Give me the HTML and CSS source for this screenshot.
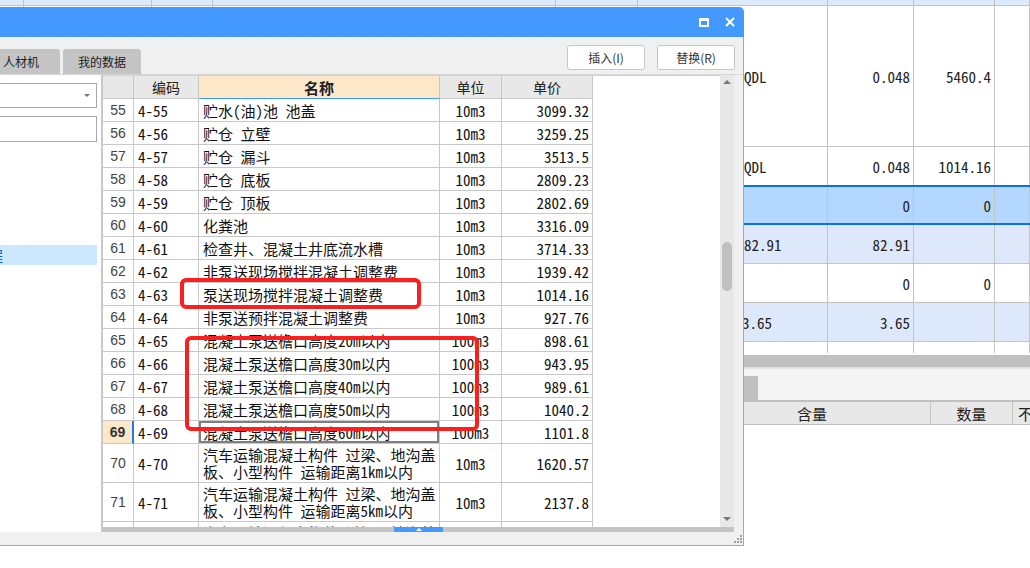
FILE: index.html
```html
<!DOCTYPE html>
<html lang="zh-CN">
<head>
<meta charset="utf-8">
<title>定额库</title>
<link rel="stylesheet" href="styles.css">
</head>
<body>
<div class="app">
  <div class="bgr bg-head"><div></div><div></div><div></div><div></div><div></div><div></div><div></div><div></div><div></div></div>
  <div class="bgr r1"><div></div><div></div><div></div><div></div><div></div><div class="l">QDL</div><div>0.048</div><div>5460.4</div><div></div></div>
  <div class="bgr r2"><div></div><div></div><div></div><div></div><div></div><div class="l">QDL</div><div>0.048</div><div>1014.16</div><div></div></div>
  <div class="bgr rsel"><div></div><div></div><div></div><div></div><div></div><div></div><div>0</div><div>0</div><div></div></div>
  <div class="bgr rn alt"><div></div><div></div><div></div><div></div><div></div><div class="l">82.91</div><div>82.91</div><div></div><div></div></div>
  <div class="bgr rn"><div></div><div></div><div></div><div></div><div></div><div></div><div>0</div><div>0</div><div></div></div>
  <div class="bgr rn alt"><div></div><div></div><div></div><div></div><div></div><div class="l l2">3.65</div><div>3.65</div><div></div><div></div></div>
  <div class="bgr r7"><div></div><div></div><div></div><div></div><div></div><div></div><div></div><div></div><div></div></div>
  <div class="bg-gap"></div>
  <div class="bg-split"></div>
  <div class="bg-tabs"><div class="bg-tab"></div></div>
  <div class="bg-head2"><div></div><div>含量</div><div>数量</div><div class="cut">不含税</div></div>
  <div class="bg-rest"></div>
</div>

<div class="dialog">
  <div class="titlebar">
    <span class="ico-max"></span>
    <svg class="ico-close" width="10" height="10" viewBox="0 0 10 10"><path d="M1 1L9 9M9 1L1 9" stroke="#fff" stroke-width="2" fill="none"/></svg>
  </div>
  <div class="dbody">
    <div class="toolbar">
      <div class="tabs"><div class="tab">人材机</div><div class="tab">我的数据</div></div>
      <div class="btns"><button class="btn">插入(I)</button><button class="btn">替换(R)</button></div>
    </div>
    <div class="main">
      <div class="left">
        <div class="combo"><span class="caret"></span></div>
        <div class="input"></div>
        <div class="sel-item"><span>工程</span></div>
      </div>
      <div class="grid">
        <div class="gtop">
          <div class="table">
            <div class="tr head"><div class="td"></div><div class="td">编码</div><div class="td hname">名称</div><div class="td">单位</div><div class="td">单价</div></div>
            <div class="tr"><div class="td n">55</div><div class="td c">4-55</div><div class="td m">贮水(油)池 池盖</div><div class="td u">10m3</div><div class="td p">3099.32</div></div>
            <div class="tr"><div class="td n">56</div><div class="td c">4-56</div><div class="td m">贮仓 立壁</div><div class="td u">10m3</div><div class="td p">3259.25</div></div>
            <div class="tr"><div class="td n">57</div><div class="td c">4-57</div><div class="td m">贮仓 漏斗</div><div class="td u">10m3</div><div class="td p">3513.5</div></div>
            <div class="tr"><div class="td n">58</div><div class="td c">4-58</div><div class="td m">贮仓 底板</div><div class="td u">10m3</div><div class="td p">2809.23</div></div>
            <div class="tr"><div class="td n">59</div><div class="td c">4-59</div><div class="td m">贮仓 顶板</div><div class="td u">10m3</div><div class="td p">2802.69</div></div>
            <div class="tr"><div class="td n">60</div><div class="td c">4-60</div><div class="td m">化粪池</div><div class="td u">10m3</div><div class="td p">3316.09</div></div>
            <div class="tr"><div class="td n">61</div><div class="td c">4-61</div><div class="td m">检查井、混凝土井底流水槽</div><div class="td u">10m3</div><div class="td p">3714.33</div></div>
            <div class="tr"><div class="td n">62</div><div class="td c">4-62</div><div class="td m">非泵送现场搅拌混凝土调整费</div><div class="td u">10m3</div><div class="td p">1939.42</div></div>
            <div class="tr"><div class="td n">63</div><div class="td c">4-63</div><div class="td m">泵送现场搅拌混凝土调整费</div><div class="td u">10m3</div><div class="td p">1014.16</div></div>
            <div class="tr"><div class="td n">64</div><div class="td c">4-64</div><div class="td m">非泵送预拌混凝土调整费</div><div class="td u">10m3</div><div class="td p">927.76</div></div>
            <div class="tr"><div class="td n">65</div><div class="td c">4-65</div><div class="td m">混凝土泵送檐口高度20m以内</div><div class="td u">100m3</div><div class="td p">898.61</div></div>
            <div class="tr"><div class="td n">66</div><div class="td c">4-66</div><div class="td m">混凝土泵送檐口高度30m以内</div><div class="td u">100m3</div><div class="td p">943.95</div></div>
            <div class="tr"><div class="td n">67</div><div class="td c">4-67</div><div class="td m">混凝土泵送檐口高度40m以内</div><div class="td u">100m3</div><div class="td p">989.61</div></div>
            <div class="tr"><div class="td n">68</div><div class="td c">4-68</div><div class="td m">混凝土泵送檐口高度50m以内</div><div class="td u">100m3</div><div class="td p">1040.2</div></div>
            <div class="tr cur"><div class="td n">69</div><div class="td c">4-69</div><div class="td m">混凝土泵送檐口高度60m以内</div><div class="td u">100m3</div><div class="td p">1101.8</div></div>
            <div class="tr tall"><div class="td n">70</div><div class="td c">4-70</div><div class="td m">汽车运输混凝土构件 过梁、地沟盖<br>板、小型构件 运输距离1km以内</div><div class="td u">10m3</div><div class="td p">1620.57</div></div>
            <div class="tr tall"><div class="td n">71</div><div class="td c">4-71</div><div class="td m">汽车运输混凝土构件 过梁、地沟盖<br>板、小型构件 运输距离5km以内</div><div class="td u">10m3</div><div class="td p">2137.8</div></div>
            <div class="tr tall"><div class="td n">72</div><div class="td c">4-72</div><div class="td m">汽车运输混凝土构件 过梁、地沟盖<br>板、小型构件 运输距离每增1km</div><div class="td u">10m3</div><div class="td p">197.45</div></div>
          </div>
          <div class="vscroll">
            <span class="arr-up"></span>
            <span class="vthumb"></span>
            <span class="arr-down"></span>
          </div>
        </div>
        <div class="hscroll"><div class="hthumb"><span class="tri"></span></div></div>
      </div>
    </div>
    <div class="dfoot">
      <svg class="grip" width="8" height="8" viewBox="0 0 8 8"><g fill="#a0a0a0"><rect x="6" y="0" width="2" height="2"/><rect x="6" y="3" width="2" height="2"/><rect x="3" y="3" width="2" height="2"/><rect x="6" y="6" width="2" height="2"/><rect x="3" y="6" width="2" height="2"/><rect x="0" y="6" width="2" height="2"/></g></svg>
    </div>
  </div>
</div>

<div class="mark mark1"></div>
<div class="mark mark2"></div>
</body>
</html>
```

FILE: styles.css
```css
:root {
  --mono: "Noto Sans Mono CJK SC", "Noto Sans CJK SC", monospace;
  --ui: "Noto Sans CJK SC", "Noto Sans", sans-serif;
}
* { box-sizing: border-box; }
html, body { margin: 0; padding: 0; }
body {
  width: 1030px;
  height: 568px;
  overflow: hidden;
  position: relative;
  background: #fff;
  font-family: var(--ui);
}

/* ---------- background application ---------- */
.app { display: flex; flex-direction: column; width: 1030px; }
.bgr {
  display: grid;
  grid-template-columns: 24px 128px 61px 343px 82px 190px 86px 81px 35px;
  border-bottom: 1px solid #c4c4c4;
}
.bgr > div {
  border-right: 1px solid #c4c4c4;
  display: flex;
  align-items: center;
  justify-content: flex-end;
  padding-right: 3px;
  font: 15px var(--mono);
  color: #222;
  white-space: nowrap;
  overflow: hidden;
}
.bgr > div.l { justify-content: flex-start; padding-left: 106px; }
.bgr > div.l2 { padding-left: 104px; }
.bg-head { height: 6px; background: #dde9fc; }
.r1 { height: 141px; }
.r2 { height: 38px; border-bottom: none; }
.rsel { height: 40px; background: #b3d7ff; border-top: 2px solid #0b6ff0; border-bottom: 2px solid #0b6ff0; }
.rn { height: 39px; }
.alt { background: #dde9fb; }
.r7 { height: 11px; border-bottom: none; }
.bg-gap { height: 2px; }
.bg-split { height: 12px; background: #c0c0c0; border-bottom: 2px solid #e4e4e4; height: 14px; }
.bg-tabs { height: 31px; background: #f4f4f4; display: flex; align-items: flex-end; }
.bg-tab { margin-left: 700px; width: 58px; height: 24px; background: #c0c0c0; }
.bg-head2 {
  display: grid;
  grid-template-columns: 694px 237px 82px 17px;
  height: 25px;
  background: #e8e8e8;
  border-top: 2px solid #c0c0c0;
  border-bottom: 1px solid #c0c0c0;
}
.bg-head2 > div {
  border-right: 1px solid #c4c4c4;
  display: flex;
  align-items: center;
  justify-content: center;
  font: 15px var(--mono);
  color: #222;
  overflow: hidden;
  white-space: nowrap;
}
.bg-head2 > div.cut { justify-content: flex-start; padding-left: 5px; border-right: none; }
.bg-rest { height: 150px; }

/* ---------- dialog ---------- */
.dialog {
  position: absolute;
  left: 0;
  top: 7px;
  width: 744px;
  height: 539px;
  display: flex;
  flex-direction: column;
  z-index: 2;
}
.titlebar {
  height: 30px;
  flex: none;
  background: #4499ff;
  border-top-right-radius: 5px;
  display: flex;
  align-items: center;
  justify-content: flex-end;
  gap: 16px;
  padding-right: 9px;
}
.ico-max {
  display: block;
  width: 10px;
  height: 9px;
  border: 2px solid #fff;
  border-top-width: 3px;
}
.ico-close { display: block; }

.dbody {
  flex: 1;
  background: #f0f0f0;
  border-right: 1px solid #a8a8a8;
  border-bottom: 1px solid #a8a8a8;
  display: flex;
  flex-direction: column;
}
.toolbar {
  height: 38px;
  flex: none;
  border-bottom: 1px solid #d6d6d6;
  display: flex;
  align-items: flex-end;
  padding-right: 8px;
}
.tabs { display: flex; gap: 3px; margin-left: -18px; }
.tab {
  height: 25px;
  background: #c4c4c4;
  border-radius: 3px 3px 0 0;
  font-size: 12px;
  line-height: 25px;
  color: #222;
  padding: 0 21px;
}
.tab + .tab { padding: 0 15px; }
.btns { margin-left: auto; align-self: flex-start; margin-top: 8px; display: flex; gap: 12px; }
.btn {
  width: 78px;
  height: 25px;
  background: #fff;
  border: 1px solid #c6c6c6;
  border-radius: 3px;
  font: 12px var(--ui);
  color: #333;
  padding: 0;
}

.main { height: 457px; flex: none; display: flex; padding-right: 9px; }
.left {
  width: 101px;
  flex: none;
  background: #fff;
  padding: 8px 4px 0 0;
  display: flex;
  flex-direction: column;
}
.combo {
  margin-left: -10px;
  height: 25px;
  border: 1px solid #a8a8a8;
  background: #fff;
  display: flex;
  align-items: center;
  justify-content: flex-end;
  padding-right: 6px;
}
.caret {
  width: 0; height: 0;
  border-left: 3px solid transparent;
  border-right: 3px solid transparent;
  border-top: 3px solid #777;
}
.input {
  margin-left: -10px;
  margin-top: 8px;
  height: 26px;
  border: 1px solid #a8a8a8;
  background: #fff;
}
.sel-item {
  margin-top: 103px;
  margin-right: -0px;
  height: 20px;
  background: #cce8ff;
  font-size: 14px;
  line-height: 20px;
  color: #0a64c8;
  overflow: visible;
  white-space: nowrap;
}
.sel-item span { display: inline-block; margin-left: -25px; }

.grid {
  width: 633px;
  flex: none;
  border-left: 2px solid #c8c8c8;
  display: flex;
  flex-direction: column;
}
.gtop { height: 452px; display: flex; }
.table {
  width: 617px;
  background: #fff;
  border-top: 1px solid #cfcfcf;
  overflow: hidden;
}
.tr {
  display: grid;
  grid-template-columns: 31px 65px 241px 62px 91px;
  width: 490px;
  height: 23px;
}
.td {
  border-right: 1px solid #c8c8c8;
  border-bottom: 1px solid #c8c8c8;
  display: flex;
  align-items: center;
  overflow: hidden;
  white-space: nowrap;
  font: 15px var(--mono);
  color: #111;
}
.head .td {
  background: #e8e8e8;
  justify-content: center;
  font: 14px var(--ui);
  color: #222;
}
.head .td.hname {
  background: #fde7c9;
  font-weight: 700;
  font-size: 15px;
  border-bottom: 1px solid #3c9bff;
}
.td.n { justify-content: center; font: 14px "Liberation Sans", sans-serif; color: #444; }
.td.c { padding-left: 4px; }
.td.m { padding-left: 4px; }
.td.u { justify-content: center; }
.td.p { justify-content: flex-end; padding-right: 3px; }
.tall { height: 39px; }
.tall .td.m { white-space: normal; line-height: 17px; }
.cur .td.n { background: #fde7c9; font-weight: 700; color: #333; border-right: 2px solid #1f7be8; }
.cur .td.m { box-shadow: inset 0 0 0 2px #7f7f7f; }

.vscroll {
  width: 14px;
  background: #e8e8e8;
  display: flex;
  flex-direction: column;
  align-items: center;
}
.arr-up {
  margin-top: 5px;
  width: 0; height: 0;
  border-left: 4px solid transparent;
  border-right: 4px solid transparent;
  border-bottom: 4px solid #777;
}
.vthumb {
  margin-top: 158px;
  width: 10px;
  height: 49px;
  border-radius: 5px;
  background: #c0c0c0;
}
.arr-down {
  margin-top: auto;
  margin-bottom: 6px;
  width: 0; height: 0;
  border-left: 4px solid transparent;
  border-right: 4px solid transparent;
  border-top: 4px solid #777;
}
.hscroll { height: 5px; background: #c4c4c4; display: flex; }
.hthumb {
  margin-left: 291px;
  width: 49px;
  height: 5px;
  background: #4499ff;
  display: flex;
  justify-content: center;
  align-items: center;
}
.tri {
  width: 0; height: 0;
  border-left: 3px solid transparent;
  border-right: 3px solid transparent;
  border-bottom: 3px solid #fff;
}
.dfoot {
  flex: 1;
  display: flex;
  justify-content: flex-end;
  align-items: flex-end;
  padding: 0 1px 2px 0;
}
.grip { display: block; }

/* ---------- red annotation marks ---------- */
.mark {
  position: absolute;
  border: 4px solid #fb1f1f;
  border-radius: 6px;
  z-index: 3;
}
.mark1 { left: 180px; top: 278px; width: 241px; height: 31px; }
.mark2 { left: 185px; top: 336px; width: 294px; height: 95px; }
```
